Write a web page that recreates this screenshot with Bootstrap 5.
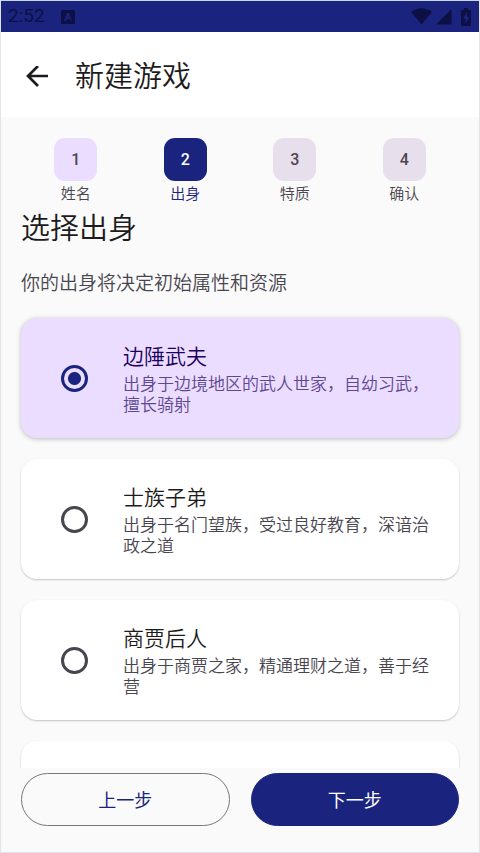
<!DOCTYPE html>
<html lang="zh-CN">
<head>
<meta charset="utf-8">
<meta name="viewport" content="width=device-width, initial-scale=1">
<title>新建游戏</title>
<link rel="stylesheet" href="https://cdn.jsdelivr.net/npm/bootstrap@5.3.0/dist/css/bootstrap.min.css">
<style>
  :root { --navy: #1a237e; --lilac: #eaddff; --ink: #1d1b20; --muted-ink: #49454f; }
  body { font-family: Roboto, "Noto Sans CJK SC", sans-serif; font-weight: 350; color: var(--ink); background: #fafafa; }
  .app-frame { border: 1px solid #e2e4ea; border-top-color: #c9d4ee; }
  .status-bar { background: var(--navy); color: #0c1044; height: 31px; padding: 0 7px; font-size: 19px; font-weight: 400; }
  .status-bar svg { display: block; }
  .top-bar { height: 85px; padding: 4px 20px 0; gap: 22px; }
  .back-btn { width: 32px; height: 32px; color: var(--ink); }
  .page-title { font-size: 29px; line-height: 44px; font-weight: 350; }
  .gutter-x { padding-left: 20px; padding-right: 20px; }
  .steps { padding-top: 21px; }
  .step-tile { width: 43px; height: 43px; border-radius: 11px; background: #e7e0ec; color: var(--muted-ink); font-size: 16px; font-weight: 500; }
  .step-name { font-size: 15px; line-height: 26px; color: var(--muted-ink); }
  .step-done .step-tile { background: var(--lilac); }
  .step-current .step-tile { background: var(--navy); color: #fff; }
  .step-current .step-name { color: var(--navy); }
  .hint { font-size: 19px; line-height: 30px; color: var(--muted-ink); padding: 18px 0 19px; }
  .scroll-area { min-height: 0; scrollbar-width: none; }
  .scroll-area::-webkit-scrollbar { display: none; }
  .origins { gap: 21px; }
  .origin { --bs-card-border-width: 0; --bs-card-border-radius: 16px; --bs-card-bg: #fff; min-height: 120px; padding: 22px 21px 22px 40px; gap: 35px; box-shadow: 0 1px 2px rgba(0,0,0,.22); cursor: pointer; }
  .origin .form-check-input { width: 27px; height: 27px; border: 3px solid var(--muted-ink); background-color: transparent; }
  .origin .form-check-input:checked { border-color: var(--navy); background-image: radial-gradient(circle, var(--navy) 6px, transparent 7px); background-size: 100% 100%; }
  .origin-name { font-size: 21px; line-height: 34px; }
  .origin-text { font-size: 17px; line-height: 21px; color: var(--muted-ink); }
  .origin:has(:checked) { --bs-card-bg: var(--lilac); box-shadow: 0 1px 5px rgba(0,0,0,.25); }
  .origin:has(:checked) .origin-name { color: #21005d; }
  .origin:has(:checked) .origin-text { color: #5f4691; }
  .actions { padding-top: 5px; padding-bottom: 26px; gap: 21px; }
  .actions .btn { height: 53px; padding-top: 8px; font-size: 18px; font-weight: 400; }
  .btn-prev { --bs-btn-color: var(--navy); --bs-btn-border-color: #79747e; --bs-btn-hover-color: var(--navy); --bs-btn-hover-bg: #eeeef6; --bs-btn-hover-border-color: #79747e; }
  .btn-next { --bs-btn-color: #fff; --bs-btn-bg: var(--navy); --bs-btn-border-color: var(--navy); --bs-btn-hover-color: #fff; --bs-btn-hover-bg: #283593; }
</style>
</head>
<body>
<div class="app-frame d-flex flex-column vh-100">
  <div class="status-bar d-flex align-items-center flex-shrink-0">
    <span>2:52</span>
    <svg class="ms-3" width="14" height="14" viewBox="0 0 14 14" aria-hidden="true"><path fill="currentColor" fill-rule="evenodd" d="M2 0h10a2 2 0 0 1 2 2v12H0V2a2 2 0 0 1 2-2zM6 3 3 11h2l1-2h3l1 2h1L8 3zM6.500 7.500 7.200 5.500 8 7.500z"/></svg>
    <div class="d-flex align-items-center ms-auto">
      <svg width="21" height="17" viewBox="0 0 21 17" aria-hidden="true"><path fill="currentColor" d="M0 4Q10.500-3.500 21 4L10.500 16.500z"/></svg>
      <svg class="ms-1" width="16" height="17" viewBox="0 0 16 17" aria-hidden="true"><path fill="currentColor" d="M15.500 1v15.500H0z"/></svg>
      <svg class="ms-2" width="12" height="18" viewBox="0 0 12 18" aria-hidden="true"><path fill="currentColor" fill-rule="evenodd" d="M4 0h4v2h2a1 1 0 0 1 1 1v14a1 1 0 0 1-1 1H2a1 1 0 0 1-1-1V3a1 1 0 0 1 1-1h2zM7 4 3 10.500h2.500V16L9 9H7z"/></svg>
    </div>
  </div>

  <header class="top-bar bg-white d-flex align-items-center flex-shrink-0">
    <button type="button" class="back-btn btn p-0 border-0 d-flex align-items-center justify-content-center" aria-label="返回">
      <svg width="22" height="22" viewBox="0 0 22 22" fill="none" stroke="currentColor" stroke-width="2.700" aria-hidden="true"><path d="M22 10H3M12 0 2 10l10 10"/></svg>
    </button>
    <h1 class="page-title mb-0">新建游戏</h1>
  </header>

  <main class="scroll-area flex-grow-1 overflow-auto gutter-x">
    <ol class="steps row g-0 list-unstyled mb-0">
      <li class="col d-flex flex-column align-items-center step-done"><span class="step-tile d-flex align-items-center justify-content-center">1</span><span class="step-name">姓名</span></li>
      <li class="col d-flex flex-column align-items-center step-current" aria-current="step"><span class="step-tile d-flex align-items-center justify-content-center">2</span><span class="step-name">出身</span></li>
      <li class="col d-flex flex-column align-items-center"><span class="step-tile d-flex align-items-center justify-content-center">3</span><span class="step-name">特质</span></li>
      <li class="col d-flex flex-column align-items-center"><span class="step-tile d-flex align-items-center justify-content-center">4</span><span class="step-name">确认</span></li>
    </ol>
    <h2 class="page-title mb-0">选择出身</h2>
    <p class="hint mb-0">你的出身将决定初始属性和资源</p>

    <div class="origins d-flex flex-column" role="radiogroup" aria-label="选择出身">
      <label class="origin card flex-row align-items-center" for="origin1">
        <input class="form-check-input flex-shrink-0 m-0" type="radio" name="origin" id="origin1" checked>
        <span><span class="origin-name d-block">边陲武夫</span><span class="origin-text d-block">出身于边境地区的武人世家，自幼习武，擅长骑射</span></span>
      </label>
      <label class="origin card flex-row align-items-center" for="origin2">
        <input class="form-check-input flex-shrink-0 m-0" type="radio" name="origin" id="origin2">
        <span><span class="origin-name d-block">士族子弟</span><span class="origin-text d-block">出身于名门望族，受过良好教育，深谙治政之道</span></span>
      </label>
      <label class="origin card flex-row align-items-center" for="origin3">
        <input class="form-check-input flex-shrink-0 m-0" type="radio" name="origin" id="origin3">
        <span><span class="origin-name d-block">商贾后人</span><span class="origin-text d-block">出身于商贾之家，精通理财之道，善于经营</span></span>
      </label>
      <div class="origin card"></div>
    </div>
  </main>

  <footer class="actions gutter-x d-flex flex-shrink-0">
    <button type="button" class="btn btn-prev rounded-pill w-100">上一步</button>
    <button type="button" class="btn btn-next rounded-pill w-100">下一步</button>
  </footer>
</div>
<script src="https://cdn.jsdelivr.net/npm/bootstrap@5.3.0/dist/js/bootstrap.bundle.min.js"></script>
</body>
</html>
